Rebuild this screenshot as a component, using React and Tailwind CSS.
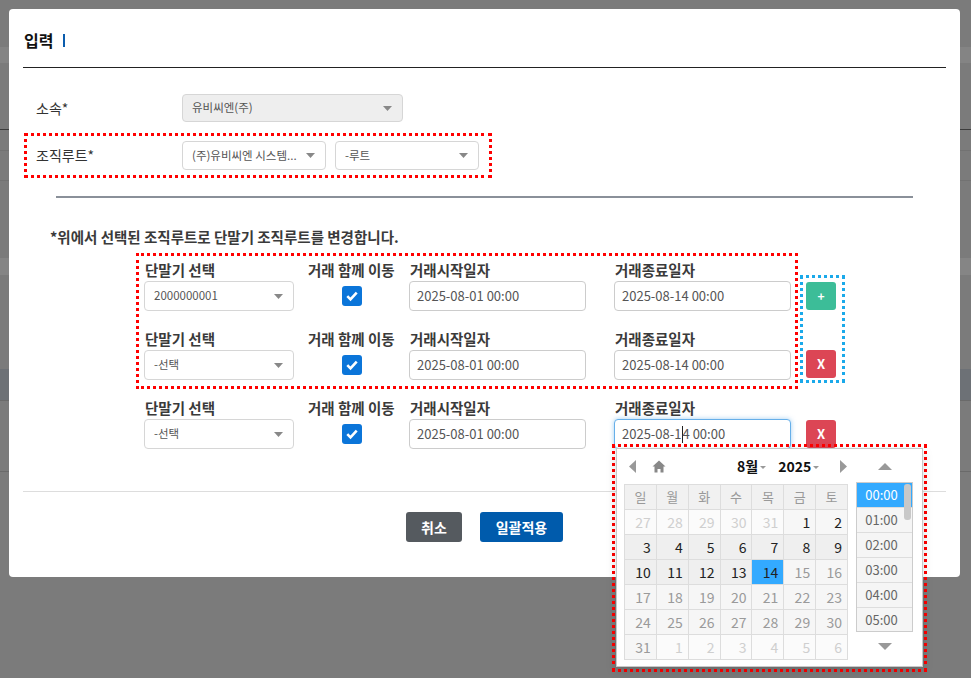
import React from 'react';

const Caret = () => (
  <svg width="9" height="5" viewBox="0 0 9 5" className="shrink-0">
    <path d="M0 0h9L4.5 5z" fill="#888" />
  </svg>
);

const Select = ({ value, className = '', disabled }) => (
  <div
    className={`flex items-center justify-between rounded-[4px] border border-[#d6d6d6] pl-[9px] pr-[10px] text-[11.5px] text-[#555] ${disabled ? 'bg-[#eeeeee]' : 'bg-white'} ${className}`}
  >
    <span className="truncate">{value}</span>
    <Caret />
  </div>
);

const Check = () => (
  <div className="w-[20px] h-[20px] rounded-[3px] bg-[#0b75d9] flex items-center justify-center">
    <svg width="14" height="14" viewBox="0 0 14 14">
      <path d="M2.3 7.2l3.2 3.2 6.2-6.8" stroke="#fff" strokeWidth="2.6" fill="none" />
    </svg>
  </div>
);

const DateInput = ({ value, focused }) => (
  <div
    className={`w-[177px] h-[30px] mt-[1px] rounded-[4px] border pl-[7px] flex items-center text-[13px] text-[#555] bg-white ${focused ? 'border-[#66afe9] shadow-[0_0_5px_rgba(102,175,233,0.6)]' : 'border-[#cccccc]'}`}
  >
    {focused ? (
      <>
        <span>2025-08-1</span>
        <span className="inline-block w-[1px] h-[17px] bg-[#222]" />
        <span>4 00:00</span>
      </>
    ) : (
      value
    )}
  </div>
);

const Label = ({ children }) => (
  <div className="h-[20px] leading-[20px] pl-[1px] text-[14.5px] font-semibold text-[#3a3a3a] whitespace-nowrap">{children}</div>
);

const TermRow = ({ serial, focused }) => (
  <div className="flex">
    <div className="w-[150px]">
      <Label>단말기 선택</Label>
      <Select value={serial} className="mt-[1px] h-[30px]" />
    </div>
    <div className="w-[88px] ml-[14px]">
      <div className="h-[20px] leading-[20px] text-[14.5px] font-semibold text-[#3a3a3a] whitespace-nowrap">거래 함께 이동</div>
      <div className="mt-[6px] flex justify-center">
        <Check />
      </div>
    </div>
    <div className="ml-[13px]">
      <Label>거래시작일자</Label>
      <DateInput value="2025-08-01 00:00" />
    </div>
    <div className="ml-[28px]">
      <Label>거래종료일자</Label>
      <DateInput value="2025-08-14 00:00" focused={focused} />
    </div>
  </div>
);

const PlusBtn = () => (
  <div className="w-[30px] h-[28px] rounded-[3px] bg-[#3cbd98] text-white text-[12px] font-bold flex items-center justify-center">+</div>
);

const DelBtn = () => (
  <div className="w-[30px] h-[28px] rounded-[3px] bg-[#dc4655] text-white text-[13px] font-semibold flex items-center justify-center">X</div>
);

const weeks = [
  [[27, 'o'], [28, 'o'], [29, 'o'], [30, 'o'], [31, 'o'], [1, 'f'], [2, 'f']],
  [[3, 'e'], [4, 'e'], [5, 'e'], [6, 'e'], [7, 'e'], [8, 'e'], [9, 'e']],
  [[10, 'e'], [11, 'e'], [12, 'e'], [13, 'e'], [14, 's'], [15, 'd'], [16, 'd']],
  [[17, 'd'], [18, 'd'], [19, 'd'], [20, 'd'], [21, 'd'], [22, 'd'], [23, 'd']],
  [[24, 'd'], [25, 'd'], [26, 'd'], [27, 'd'], [28, 'd'], [29, 'd'], [30, 'd']],
  [[31, 'd'], [1, 'o'], [2, 'o'], [3, 'o'], [4, 'o'], [5, 'o'], [6, 'o']],
];

const cellStyle = {
  o: 'bg-[#fbfbfb] text-[#cfcfcf]',
  f: 'bg-[#f7f7f7] text-[#222]',
  e: 'bg-[#efefef] text-[#222]',
  s: 'bg-[#33aaff] text-[#222]',
  d: 'bg-[#f6f6f6] text-[#9a9a9a]',
};

const DatePicker = () => (
  <div className="absolute left-[603px] top-[435px] w-[315px] h-[228px] border-[3px] border-dotted border-[#ff0000] p-[1px]">
    <div className="w-[307px] h-[219px] bg-white border border-[#c8c8c8] shadow-[0_4px_10px_rgba(0,0,0,0.15)] flex pt-[7px] pl-[7px]">
      <div className="w-[224px]">
        <div className="h-[20px] flex items-center">
          <svg width="7" height="13" viewBox="0 0 7 13" className="ml-[5px]">
            <path d="M7 0v13L0 6.5z" fill="#999" />
          </svg>
          <svg width="14" height="13" viewBox="0 0 14 13" className="ml-[16px]">
            <path d="M7 0.5L13.5 6.5H11.5V12.5H8.5V9H5.5V12.5H2.5V6.5H0.5Z" fill="#888" />
          </svg>
          <div className="ml-[71px] flex items-center text-[14px] font-semibold text-[#111]">
            8월
            <svg width="6" height="3" viewBox="0 0 6 3" className="ml-[2px] mt-[3px]">
              <path d="M0 0h6L3 3z" fill="#999" />
            </svg>
          </div>
          <div className="ml-[12px] flex items-center text-[14px] font-semibold text-[#111]">
            2025
            <svg width="6" height="3" viewBox="0 0 6 3" className="ml-[2px] mt-[3px]">
              <path d="M0 0h6L3 3z" fill="#999" />
            </svg>
          </div>
          <svg width="7" height="13" viewBox="0 0 7 13" className="ml-[21px]">
            <path d="M0 0v13L7 6.5z" fill="#999" />
          </svg>
        </div>
        <div className="mt-[8px] border-l border-t border-[#dddddd]">
          <div className="flex">
            {['일', '월', '화', '수', '목', '금', '토'].map((d) => (
              <div key={d} className="w-[32px] h-[25px] border-r border-b border-[#dddddd] bg-[#f1f1f1] text-[#999] text-[13px] flex items-center justify-center">
                {d}
              </div>
            ))}
          </div>
          {weeks.map((w, i) => (
            <div key={i} className="flex">
              {w.map(([n, t], j) => (
                <div key={j} className={`w-[32px] h-[25px] border-r border-b border-[#dddddd] text-[14px] flex items-center justify-end pr-[5px] ${cellStyle[t]}`}>
                  {n}
                </div>
              ))}
            </div>
          ))}
        </div>
      </div>
      <div className="w-[57px] ml-[8px]">
        <div className="h-[20px] flex items-center justify-center">
          <svg width="14" height="7" viewBox="0 0 14 7">
            <path d="M0 7h14L7 0z" fill="#999" />
          </svg>
        </div>
        <div className="relative mt-[6px] h-[150px] border border-[#cccccc] overflow-hidden">
          {['00:00', '01:00', '02:00', '03:00', '04:00', '05:00'].map((t, i) => (
            <div
              key={t}
              className={`h-[25px] border-b border-[#dddddd] text-[13px] flex items-center justify-center pr-[6px] ${i === 0 ? 'bg-[#33aaff] text-white' : 'bg-[#f5f5f5] text-[#666]'}`}
            >
              {t}
            </div>
          ))}
          <div className="absolute right-[1px] top-[1px] w-[7px] h-[36px] rounded-[3px] bg-[#c8c8c8]" />
        </div>
        <div className="mt-[4px] h-[20px] flex items-center justify-center">
          <svg width="14" height="7" viewBox="0 0 14 7">
            <path d="M0 0h14L7 7z" fill="#999" />
          </svg>
        </div>
      </div>
    </div>
  </div>
);

export default function App() {
  return (
    <div className="relative w-[971px] h-[678px] overflow-hidden bg-[#7b7b7b] font-['Noto_Sans_CJK_KR','Noto_Sans',sans-serif]">
      {/* page behind the overlay */}
      <div className="flex flex-col">
        <div className="h-[47px]" />
        <div className="h-[16px] bg-[#848484]" />
        <div className="h-[66px]" />
        <div className="h-[1px] bg-[#3c3c3c]" />
        <div className="h-[20px]" />
        <div className="h-[1px] bg-[#727272]" />
        <div className="h-[29px]" />
        <div className="h-[1px] bg-[#727272]" />
        <div className="h-[77px]" />
        <div className="h-[17px] bg-[#858585]" />
        <div className="h-[94px]" />
        <div className="h-[31px] bg-[#6d7176]" />
        <div className="h-[1px] bg-[#6a6a6a]" />
        <div className="h-[70px]" />
        <div className="h-[1px] bg-[#6a6a6a]" />
      </div>

      <div className="absolute left-[9px] top-[9px] w-[951px] h-[568px] bg-white rounded-[4px] px-[14px]">
        <div className="h-[59px] flex items-center pt-[4px] border-b border-[#222]">
          <span className="pl-[1px] text-[16px] font-bold text-[#111]">입력</span>
          <span className="ml-[10px] w-[2px] h-[13px] bg-[#0b5cad]" />
        </div>

        <div className="mt-[26px] flex items-center">
          <div className="w-[159px] pl-[13px] text-[14px] text-[#333]">소속*</div>
          <Select value="유비씨엔(주)" disabled className="w-[221px] h-[28px]" />
        </div>

        <div className="mt-[11px] ml-[1px] w-[468px] h-[45px] border-[3px] border-dotted border-[#ff0000] flex items-center">
          <div className="w-[155px] pl-[9px] text-[14px] text-[#333]">조직루트*</div>
          <Select value="(주)유비씨엔 시스템..." className="w-[144px] h-[29px]" />
          <Select value="-루트" className="ml-[9px] w-[144px] h-[29px]" />
        </div>

        <div className="mt-[18px] ml-[33px] w-[857px] h-[2px] bg-[#8a9099]" />

        <div className="mt-[29px] pl-[27px] h-[20px] leading-[20px] text-[14.5px] font-semibold text-[#3a3a3a]">
          *위에서 선택된 조직루트로 단말기 조직루트를 변경합니다.
        </div>

        <div className="mt-[6px] ml-[113px] flex items-start">
          <div className="border-[3px] border-dotted border-[#ff0000] pt-[4px] pb-[6px] pl-[5px] pr-[4px] flex flex-col gap-[18px]">
            <TermRow serial="2000000001" />
            <TermRow serial="-선택" />
          </div>
          <div className="ml-[2px] mt-[22px] border-[3px] border-dotted border-[#1aa9ea] pt-[4px] pb-[2px] pl-[3px] pr-[6px] flex flex-col gap-[40px]">
            <PlusBtn />
            <DelBtn />
          </div>
        </div>

        <div className="mt-[9px] ml-[121px] flex items-start">
          <TermRow serial="-선택" focused />
          <div className="ml-[15px] mt-[22px]">
            <DelBtn />
          </div>
        </div>

        <div className="mt-[42px] h-[1px] bg-[#dddddd]" />

        <div className="mt-[20px] flex justify-center gap-[18px]">
          <button className="w-[56px] h-[30px] rounded-[3px] bg-[#555a5f] text-white text-[14px] font-semibold">취소</button>
          <button className="w-[83px] h-[30px] rounded-[3px] bg-[#005bac] text-white text-[14px] font-semibold">일괄적용</button>
        </div>

        <DatePicker />
      </div>
    </div>
  );
}
